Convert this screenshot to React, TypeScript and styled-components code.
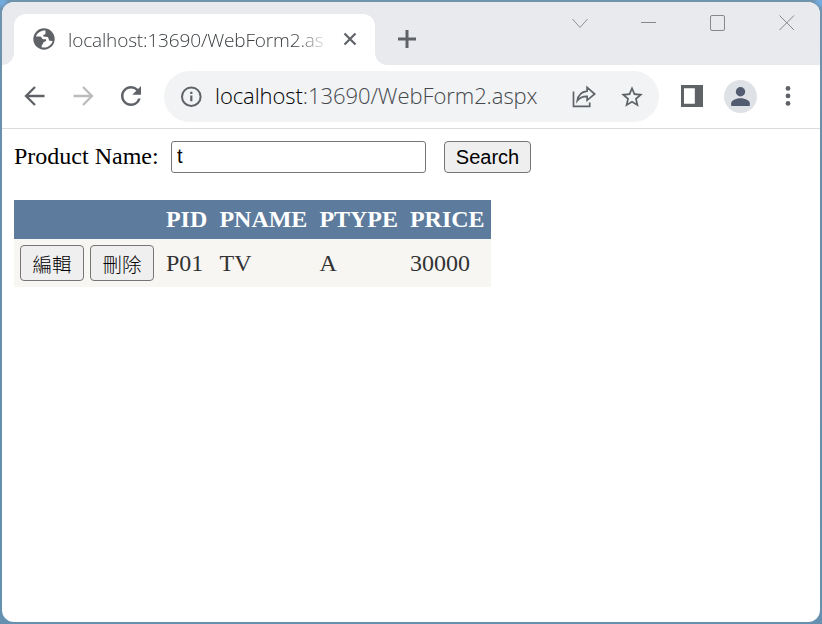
import React from 'react';
import styled, { createGlobalStyle } from 'styled-components';
import { MdRefresh, MdStarBorder } from 'react-icons/md';

const GlobalStyle = createGlobalStyle`
  * { box-sizing: border-box; }
  body { margin: 0; background: #6f9abf; }
`;

const Desktop = styled.div`
  width: 822px;
  height: 624px;
  padding: 2px;
  background:
    radial-gradient(circle at 0 0, #74abdf 4px, transparent 9px),
    radial-gradient(circle at 100% 0, #74abdf 4px, transparent 9px),
    linear-gradient(#7093ae, #668fad 30%, #6690b0);
`;

const Window = styled.div`
  display: flex;
  flex-direction: column;
  height: 620px;
  border-radius: 12px;
  overflow: hidden;
  background: #fff;
`;

const TabStrip = styled.div`
  display: flex;
  height: 63px;
  padding: 12px 0 0 12px;
  background: #e8eaed;
`;

const Tab = styled.div`
  position: relative;
  display: flex;
  align-items: center;
  width: 361px;
  height: 51px;
  padding: 0 0 1px 19px;
  background: #fff;
  border-radius: 12px 12px 0 0;
  &::before, &::after {
    content: '';
    position: absolute;
    bottom: 0;
    width: 12px;
    height: 12px;
  }
  &::before {
    left: -12px;
    background: radial-gradient(circle at 0 0, transparent 11.5px, #fff 12.2px);
  }
  &::after {
    right: -12px;
    background: radial-gradient(circle at 100% 0, transparent 11.5px, #fff 12.2px);
  }
`;

const TabTitle = styled.div`
  width: 257px;
  margin: 1px 0 0 13px;
  overflow: hidden;
  white-space: nowrap;
  font: 300 19px/28px 'Open Sans', sans-serif;
  letter-spacing: -0.15px;
  color: #3c4043;
  mask-image: linear-gradient(90deg, #000 228px, transparent 262px);
`;

const TabClose = styled.svg`
  margin-left: 18px;
`;

const NewTab = styled.svg`
  margin: 15px 0 0 22px;
`;

const Controls = styled.div`
  display: flex;
  gap: 51px;
  margin: 0 24px 0 auto;
`;

const Toolbar = styled.div`
  display: flex;
  align-items: center;
  height: 64px;
  padding: 0 29px 1px 18px;
  border-bottom: 1px solid #dadce0;
  color: #5f6368;
`;

const NavButtons = styled.div`
  display: flex;
  align-items: center;
  gap: 18px;
  width: 144px;
  svg { flex: none; }
`;

const Omnibox = styled.div`
  display: flex;
  align-items: center;
  width: 495px;
  height: 51px;
  padding: 0 14px 0 16px;
  border-radius: 26px;
  background: #f1f3f4;
`;

const Url = styled.div`
  flex: 1;
  margin: 0 0 2px 13px;
  white-space: nowrap;
  font: 300 22px/30px 'Open Sans', sans-serif;
  letter-spacing: -0.07px;
  color: #44484c;
`;

const Host = styled.span`
  color: #000;
`;

const BoxActions = styled.div`
  display: flex;
  align-items: center;
  gap: 22px;
  padding-top: 2px;
`;

const ToolActions = styled.div`
  display: flex;
  align-items: center;
  margin-left: auto;
`;

const Avatar = styled.div`
  display: flex;
  width: 33px;
  height: 33px;
  margin: 0 28px 0 21px;
  border-radius: 50%;
  background: #dee1e6;
`;

const Page = styled.main`
  padding: 12px;
  font: 24px/27px 'Liberation Serif', serif;
  color: #000;
`;

const SearchForm = styled.div`
  display: flex;
  align-items: center;
  height: 32px;
  margin-bottom: 27px;
`;

const Label = styled.label`
  width: 157px;
  padding-bottom: 2px;
  white-space: nowrap;
`;

const TextInput = styled.input`
  width: 255px;
  height: 32px;
  padding: 0 5px 1px;
  border: 1px solid #767676;
  border-radius: 3px;
  background: #fff;
  font: 20px 'Liberation Sans', sans-serif;
  color: #000;
  outline: none;
`;

const Button = styled.button<{ $w: number; $h: number; $gap?: number; $size?: number }>`
  width: ${p => p.$w}px;
  height: ${p => p.$h}px;
  margin: 0 0 0 ${p => p.$gap ?? 0}px;
  padding: 0;
  border: 1px solid #767676;
  border-radius: 4px;
  background: #efefef;
  font: 300 ${p => p.$size ?? 20}px 'Liberation Sans', 'Noto Sans CJK TC', sans-serif;
  color: #000;
  white-space: nowrap;
`;

const Grid = styled.table`
  width: 477px;
  table-layout: fixed;
  border-collapse: collapse;
  color: #333;
`;

const HeadRow = styled.tr`
  height: 39px;
  background: #5d7b9d;
  color: #fff;
`;

const BodyRow = styled.tr`
  height: 48px;
  background: #f7f6f3;
`;

const HeadCell = styled.th<{ $w: number }>`
  width: ${p => p.$w}px;
  padding: 0 6px;
  text-align: left;
  white-space: nowrap;
  letter-spacing: -0.05px;
`;

const Cell = styled.td`
  padding: 0 6px;
`;

const Actions = styled.div`
  display: flex;
  gap: 6px;
`;

const columns = [
  { name: '', width: 146 },
  { name: 'PID', width: 53.5 },
  { name: 'PNAME', width: 100 },
  { name: 'PTYPE', width: 90.5 },
  { name: 'PRICE', width: 87 },
];

const rows = [['P01', 'TV', 'A', '30000']];

const Globe = () => (
  <svg width="22" height="22" viewBox="0 0 22 22">
    <circle cx="11" cy="11" r="10.7" fill="#5f6368" />
    <path
      d="M12.5 2.4C8 2.2 4.3 4.6 2.9 8.6L7 8.6C9.3 8.8 8.3 11.1 10.4 11.2L12.8 11.3C14 12.7 12.6 13.6 11 14C9.8 14.5 10.6 16 8.8 16.9L8.6 19.3C13.5 20.6 18.5 17.4 19.6 12.9L16.6 12.8C15.4 12.2 16.2 9.6 14.3 8.9L10.7 8.6C9.6 7.6 10.2 6.7 11.6 6.4C13.2 6 12.2 4.2 12.5 2.4Z"
      fill="#fff"
    />
  </svg>
);

const Arrow = ({ forward = false }: { forward?: boolean }) => (
  <svg width="30" height="30" viewBox="0 0 30 30">
    <path
      d={forward ? 'M5.5 15H23.5M15 6L24 15L15 24' : 'M24.5 15H6.5M15 6L6 15L15 24'}
      fill="none"
      stroke={forward ? '#babcbe' : '#5f6368'}
      strokeWidth="2.3"
    />
  </svg>
);

export default function App() {
  return (
    <>
      <GlobalStyle />
      <Desktop>
        <Window>
          <TabStrip>
            <Tab>
              <Globe />
              <TabTitle>localhost:13690/WebForm2.aspx</TabTitle>
              <TabClose width="14" height="14" viewBox="0 0 14 14">
                <path d="M1.5 1.5L12.5 12.5M12.5 1.5L1.5 12.5" stroke="#5f6368" strokeWidth="2.2" />
              </TabClose>
            </Tab>
            <NewTab width="20" height="20" viewBox="0 0 20 20">
              <path d="M10 1V19M1 10H19" stroke="#5f6368" strokeWidth="3" />
            </NewTab>
            <Controls>
              <svg width="18" height="18" viewBox="0 0 18 18" fill="none" stroke="#909294">
                <path d="M1.5 5L9 13.5L16.5 5" />
              </svg>
              <svg width="18" height="18" viewBox="0 0 18 18" fill="none" stroke="#85878a">
                <path d="M1 8.5H16" />
              </svg>
              <svg width="18" height="18" viewBox="0 0 18 18" fill="none" stroke="#85878a">
                <rect x="1.5" y="1.5" width="14" height="15" rx="1.5" />
              </svg>
              <svg width="18" height="18" viewBox="0 0 18 18" fill="none" stroke="#85878a">
                <path d="M1.5 1.5L16 16M16 1.5L1.5 16" />
              </svg>
            </Controls>
          </TabStrip>
          <Toolbar>
            <NavButtons>
              <Arrow />
              <Arrow forward />
              <MdRefresh size={30} />
            </NavButtons>
            <Omnibox>
              <svg width="22" height="22" viewBox="0 0 22 22" fill="none" stroke="#5f6368">
                <circle cx="11.3" cy="11.7" r="9.3" strokeWidth="2" />
                <path d="M11.3 10.6V16.2M11.3 6.7V9" strokeWidth="2.2" />
              </svg>
              <Url>
                <Host>localhost</Host>:13690/WebForm2.aspx
              </Url>
              <BoxActions>
                <svg width="25" height="24" viewBox="0 0 25 24" fill="none" stroke="#5f6368" strokeWidth="1.7">
                  <path d="M1.5 6.5V21.3H17.7V17.5M5.3 15.8C6 10.4 9 7 15.1 6.2V2.4L22.7 9L15.1 15.3V11.4C10.8 11.3 7.8 12.5 5.3 15.8Z" />
                </svg>
                <MdStarBorder size={26} />
              </BoxActions>
            </Omnibox>
            <ToolActions>
              <svg width="22" height="22" viewBox="0 0 22 22">
                <path fill="#5f6368" fillRule="evenodd" d="M0 0H22V22H0ZM3 3.3V18.7H13.8V3.3Z" />
              </svg>
              <Avatar>
                <svg width="33" height="33" viewBox="0 0 33 33" fill="#515c70">
                  <circle cx="16.5" cy="11.8" r="4.7" />
                  <path d="M7.2 26V23.2C7.2 19.7 13.2 18.2 16.5 18.2S25.8 19.7 25.8 23.2V26Z" />
                </svg>
              </Avatar>
              <svg width="6" height="22" viewBox="0 0 6 22" fill="#5f6368">
                <circle cx="3" cy="3.4" r="2.4" />
                <circle cx="3" cy="10.9" r="2.4" />
                <circle cx="3" cy="18.4" r="2.4" />
              </svg>
            </ToolActions>
          </Toolbar>
          <Page>
            <SearchForm>
              <Label htmlFor="product">Product Name:</Label>
              <TextInput id="product" defaultValue="t" />
              <Button $w={87} $h={32} $gap={18}>Search</Button>
            </SearchForm>
            <Grid>
              <thead>
                <HeadRow>
                  {columns.map(c => (
                    <HeadCell key={c.name} $w={c.width}>{c.name}</HeadCell>
                  ))}
                </HeadRow>
              </thead>
              <tbody>
                {rows.map(row => (
                  <BodyRow key={row[0]}>
                    <Cell>
                      <Actions>
                        <Button $w={64} $h={36} $size={19.5}>編輯</Button>
                        <Button $w={64} $h={36} $size={19.5}>刪除</Button>
                      </Actions>
                    </Cell>
                    {row.map(value => (
                      <Cell key={value}>{value}</Cell>
                    ))}
                  </BodyRow>
                ))}
              </tbody>
            </Grid>
          </Page>
        </Window>
      </Desktop>
    </>
  );
}
